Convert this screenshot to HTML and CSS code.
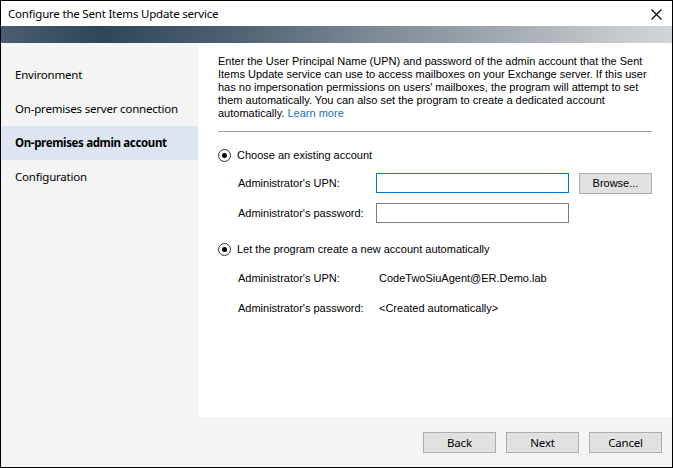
FILE: index.html
```html
<!DOCTYPE html>
<html>
<head>
<meta charset="utf-8">
<link rel="stylesheet" href="styles.css">
</head>
<body>
<div class="window">
  <div class="titlebar">
    <span class="title">Configure the Sent Items Update service</span>
    <svg class="close" width="11" height="11" viewBox="0 0 11 11"><path d="M0.5 0.5 L10.5 10.5 M10.5 0.5 L0.5 10.5" stroke="#000" stroke-width="1.1" fill="none"/></svg>
  </div>
  <div class="banner"></div>
  <div class="main">
    <div class="sidebar">
      <div class="nav-item">Environment</div>
      <div class="nav-item">On-premises server connection</div>
      <div class="nav-item active">On-premises admin account</div>
      <div class="nav-item">Configuration</div>
    </div>
    <div class="content">
      <p class="intro">Enter the User Principal Name (UPN) and password of the admin account that the Sent Items Update service can use to access mailboxes on your Exchange server. If this user has no impersonation permissions on users' mailboxes, the program will attempt to set them automatically. You can also set the program to create a dedicated account automatically. <a class="link">Learn more</a></p>
      <div class="sep"></div>
      <div class="radio-row first">
        <span class="radio"><span class="dot"></span></span>
        <span>Choose an existing account</span>
      </div>
      <div class="field-row r1">
        <span class="label">Administrator's UPN:</span>
        <span class="input focused"></span>
        <span class="btn browse">Browse...</span>
      </div>
      <div class="field-row r2">
        <span class="label">Administrator's password:</span>
        <span class="input"></span>
      </div>
      <div class="radio-row second">
        <span class="radio"><span class="dot"></span></span>
        <span>Let the program create a new account automatically</span>
      </div>
      <div class="field-row r3">
        <span class="label">Administrator's UPN:</span>
        <span class="value">CodeTwoSiuAgent@ER.Demo.lab</span>
      </div>
      <div class="field-row r4">
        <span class="label">Administrator's password:</span>
        <span class="value">&lt;Created automatically&gt;</span>
      </div>
    </div>
  </div>
  <div class="footer">
    <span class="btn">Back</span>
    <span class="btn">Next</span>
    <span class="btn">Cancel</span>
  </div>
</div>
</body>
</html>
```
FILE: styles.css
```css
* { box-sizing: border-box; }
html, body { margin: 0; padding: 0; background: #fff; }
.window {
  width: 673px;
  height: 468px;
  border: 1px solid #000;
  display: flex;
  flex-direction: column;
  background: #f4f4f4;
  font-family: "Liberation Sans", Arial, sans-serif;
  font-size: 11px;
  color: #000;
}
.titlebar {
  height: 25px;
  background: #fff;
  display: flex;
  align-items: center;
  justify-content: space-between;
  padding: 0 10px 0 7px;
}
.title {
  font-family: "Noto Sans", sans-serif;
  font-size: 11.5px;
  letter-spacing: -0.2px;
}
.close { margin-top: 1px; }
.banner {
  height: 17px;
  background: linear-gradient(90deg, #4b5d70 0%, #2f4659 15%, #4f6172 35%, #7c8894 55%, #a3aab1 75%, #c6cacd 92%, #d2d5d8 100%);
}
.main {
  height: 374px;
  display: flex;
}
.sidebar {
  width: 197px;
  flex-shrink: 0;
  padding-top: 15px;
  background: #f4f4f4;
}
.nav-item {
  height: 34px;
  display: flex;
  align-items: center;
  padding: 0 0 1px 14px;
  font-family: "Noto Sans", sans-serif;
  font-size: 11.5px;
  letter-spacing: -0.2px;
  color: #000;
}
.nav-item.active {
  background: #dde5f2;
  font-weight: bold;
  letter-spacing: -0.35px;
}
.content {
  flex: 1;
  min-width: 0;
  background: #fff;
  padding: 12px 18px 0 20px;
}
.intro {
  margin: 0;
  line-height: 13px;
}
.link {
  color: #1a6fc4;
  display: inline-block;
  line-height: 13px;
}
.sep {
  height: 1px;
  background: #a0a0a0;
  margin-top: 11px;
  width: 434px;
}
.radio-row {
  display: flex;
  align-items: center;
  gap: 6px;
  height: 14px;
}
.radio-row.first { margin-top: 16px; }
.radio-row.second { margin-top: 19px; }
.radio {
  width: 13px;
  height: 13px;
  border: 1px solid #333;
  border-radius: 50%;
  display: flex;
  align-items: center;
  justify-content: center;
  background: #fff;
}
.dot {
  width: 5px;
  height: 5px;
  border-radius: 50%;
  background: #000;
}
.field-row {
  display: flex;
  align-items: center;
  padding-left: 20px;
  height: 20px;
}
.field-row.r1 { margin-top: 11px; }
.field-row.r2 { margin-top: 10px; }
.field-row.r3 { margin-top: 12px; }
.field-row.r4 { margin-top: 10px; }
.label { width: 138px; }
.value { margin-left: 3px; }
.input {
  width: 193px;
  height: 20px;
  border: 1px solid #7a7a7a;
  background: #fff;
}
.input.focused { border-color: #0078d7; }
.btn {
  width: 73px;
  height: 21px;
  border: 1px solid #adadad;
  background: #e1e1e1;
  display: flex;
  align-items: center;
  justify-content: center;
  font-family: "Noto Sans", sans-serif;
  font-size: 11.5px;
  letter-spacing: -0.2px;
}
.browse {
  margin-left: 10px;
  font-family: "Liberation Sans", Arial, sans-serif;
  font-size: 11px;
  letter-spacing: 0;
}
.footer {
  height: 49px;
  background: #f4f4f4;
  display: flex;
  justify-content: flex-end;
  gap: 10px;
  padding: 15px 10px 0 0;
}
```
